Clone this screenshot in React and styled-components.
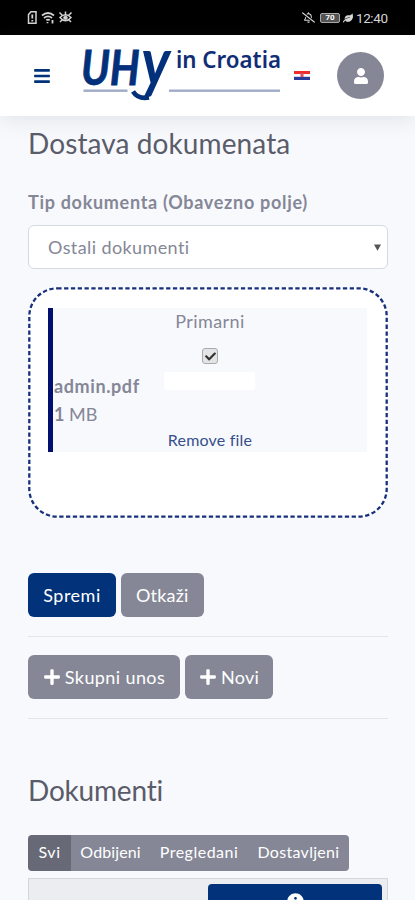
import styled, { createGlobalStyle } from "styled-components";
import {
  FaBars,
  FaUser,
  FaPlus,
  FaInfoCircle,
  FaRegBellSlash,
  FaLeaf,
  FaCheck,
} from "react-icons/fa";

const COLORS = {
  navy: "#02337a",
  darkNavy: "#000f70",
  grey: "#858796",
  darkGrey: "#676977",
  heading: "#5a5c69",
  page: "#f8f9fd",
  line: "#e4e5ea",
};

const filters = [
  { label: "Svi", width: 43, spacing: 0.6, active: true },
  { label: "Odbijeni", width: 79, spacing: 0.1 },
  { label: "Pregledani", width: 98, spacing: 0.5 },
  { label: "Dostavljeni", width: 101, spacing: 0.3 },
];

const App = () => {
  return (
    <>
      <GlobalStyle />
      <Screen>
        <StatusBar>
          <StatusLeft>
            <svg width="46" height="16" viewBox="0 0 46 16" fill="none" stroke="#d4d4d4">
              <path d="M1.5 4.5 4 1.7h5v11.6H1.5z" strokeWidth="1.5" />
              <path d="M5.3 4.5v4M5.3 10v1.5" strokeWidth="1.8" />
              <path d="M15 5.5q6-5 12 0M17 8q4-3.2 8 0M19.3 10.3q1.7-1.3 3.4 0" strokeWidth="1.7" />
              <path d="M20.5 12v1.3M25.5 10v3.5" strokeWidth="1.8" />
              <path d="M33 7.5q5.5-5.5 11 0q-5.5 6.5-11 0zM32.5 2.5l3 3M38.5 1.5v3M44.5 2.5l-3 3M33 12l2-2M44 12l-2-2" strokeWidth="1.5" />
              <circle cx="38.5" cy="7.7" r="1.8" fill="#d4d4d4" />
            </svg>
          </StatusLeft>
          <StatusRight>
            <FaRegBellSlash size={13} />
            <Battery>70</Battery>
            <FaLeaf size={10} />
            <Clock>12:40</Clock>
          </StatusRight>
        </StatusBar>

        <Header>
          <MenuButton>
            <FaBars size={18} />
          </MenuButton>
          <Logo />
          <Flag />
          <Avatar>
            <FaUser size={16} />
          </Avatar>
        </Header>

        <Content>
          <Title>Dostava dokumenata</Title>
          <Label>Tip dokumenta (Obavezno polje)</Label>
          <Select>
            <span>Ostali dokumenti</span>
            <Arrow width="7" height="7" viewBox="0 0 7 7">
              <path d="M0 0.5h7L3.5 6.8z" fill="#555" />
            </Arrow>
          </Select>

          <DropZone>
            <DropBorder width="360" height="231">
              <rect x="1.3" y="1.3" width="357.4" height="228.4" rx="28" />
            </DropBorder>
            <FileCard>
              <Primary>Primarni</Primary>
              <Checkbox>
                <FaCheck size={11} />
              </Checkbox>
              <FileRow>
                <FileName>admin.pdf</FileName>
                <BlankField />
              </FileRow>
              <FileSize>
                <b>1</b> MB
              </FileSize>
              <RemoveLink>Remove file</RemoveLink>
            </FileCard>
          </DropZone>

          <ButtonRow>
            <Button $primary $width={88} $spacing={0.5}>
              Spremi
            </Button>
            <Button $width={82.5} $spacing={0.2}>
              Otkaži
            </Button>
          </ButtonRow>
          <Line />
          <ButtonRow>
            <Button $width={152} $spacing={0.4}>
              <FaPlus size={18} /> Skupni unos
            </Button>
            <Button $width={88} $spacing={0.2}>
              <FaPlus size={18} /> Novi
            </Button>
          </ButtonRow>
          <Line />

          <SubTitle>Dokumenti</SubTitle>
          <Filters>
            {filters.map((filter) => (
              <Filter
                key={filter.label}
                $active={filter.active}
                $width={filter.width}
                $spacing={filter.spacing}
              >
                {filter.label}
              </Filter>
            ))}
          </Filters>
          <Table>
            <InfoButton>
              <FaInfoCircle size={17} />
            </InfoButton>
          </Table>
        </Content>
      </Screen>
    </>
  );
};

const Logo = () => (
  <LogoSvg width="200" height="54" viewBox="0 0 200 54">
    <rect x="1.5" y="40.5" width="44" height="2.4" fill="#a0abc8" />
    <rect x="87" y="40.5" width="111" height="2.4" fill="#a0abc8" />
    <text
      x="-1"
      y="36"
      fill="#02307a"
      stroke="#02307a"
      strokeWidth="0.8"
      fontFamily="Lato, sans-serif"
      fontSize="47"
      fontStyle="italic"
      fontWeight="700"
      textLength="89"
      lengthAdjust="spacingAndGlyphs"
    >
      UH<tspan dx="1.5" fontSize="66" strokeWidth="0">y</tspan>
    </text>
    {/* swoosh under the y */}
    <path d="M51 42.5Q56 50.5 67 48.5" fill="none" stroke="#02307a" strokeWidth="4.6" />
    <text x="94" y="19.3" fill="#102d76" fontFamily="Noto Sans, sans-serif" fontSize="22.5" fontWeight="600" textLength="105" lengthAdjust="spacingAndGlyphs">
      in Croatia
    </text>
  </LogoSvg>
);

const Flag = () => (
  <FlagSvg width="16" height="9" viewBox="0 0 16 9">
    <rect width="16" height="3.2" fill="#f02b2b" />
    <rect y="3.2" width="16" height="2.6" fill="#fff" />
    <rect y="5.8" width="16" height="3.2" fill="#2a3a98" />
    <rect x="6.5" y="2" width="3" height="4" fill="#d8505a" />
  </FlagSvg>
);

const GlobalStyle = createGlobalStyle`
  * {
    box-sizing: border-box;
  }
  body {
    margin: 0;
    overflow: hidden;
    font-family: Lato, "Noto Sans", sans-serif;
    color: ${COLORS.grey};
  }
`;

const Screen = styled.div`
  display: flex;
  flex-direction: column;
  width: 415px;
  height: 900px;
  overflow: hidden;
  background-color: ${COLORS.page};
`;

const StatusBar = styled.div`
  display: flex;
  justify-content: space-between;
  align-items: center;
  flex: none;
  height: 35px;
  padding: 0 27px;
  background-color: #000;
  color: #d8d8d8;
`;

const StatusLeft = styled.div`
  display: flex;
`;

const StatusRight = styled.div`
  display: flex;
  align-items: center;
  gap: 3px;
`;

const Battery = styled.span`
  width: 20px;
  height: 10px;
  margin-left: 2px;
  border: 1px solid #aaa;
  border-radius: 2px;
  background-color: #555;
  color: #fff;
  font: bold 8px/8px Roboto, sans-serif;
  text-align: center;
`;

const Clock = styled.span`
  width: 32px;
  font: 13.5px/16px Roboto, sans-serif;
  letter-spacing: -0.4px;
  white-space: nowrap;
`;

const Header = styled.header`
  display: flex;
  align-items: center;
  flex: none;
  height: 81px;
  padding-left: 33px;
  background-color: #fff;
  box-shadow: 0 2px 22px rgba(58, 59, 69, 0.13);
`;

const MenuButton = styled.div`
  display: flex;
  width: 49px;
  color: ${COLORS.navy};
`;

const LogoSvg = styled.svg`
  overflow: visible;
`;

const FlagSvg = styled.svg`
  margin-left: 12px;
`;

const Avatar = styled.div`
  display: flex;
  justify-content: center;
  align-items: center;
  width: 47px;
  height: 47px;
  margin-left: 27px;
  border-radius: 50%;
  background-color: ${COLORS.grey};
  color: #fff;
`;

const Content = styled.main`
  padding: 10px 27px 0 28px;
`;

const Title = styled.h1`
  margin: 0;
  color: ${COLORS.heading};
  font-size: 28px;
  font-weight: 400;
  line-height: 34px;
  letter-spacing: 0.1px;
  white-space: nowrap;
`;

const SubTitle = styled(Title)`
  margin-top: 54px;
  letter-spacing: -0.2px;
`;

const Label = styled.div`
  margin-top: 31px;
  font-size: 18px;
  font-weight: 700;
  line-height: 22px;
  letter-spacing: 0.7px;
  white-space: nowrap;
`;

const Select = styled.div`
  display: flex;
  justify-content: space-between;
  align-items: center;
  height: 44px;
  margin-top: 12px;
  padding: 0 6px 0 19px;
  border: 1px solid #d6d8e2;
  border-radius: 6px;
  background-color: #fff;
  font-size: 18px;
  letter-spacing: 0.4px;
`;

const Arrow = styled.svg`
  flex: none;
`;

const DropZone = styled.div`
  position: relative;
  height: 231px;
  margin-top: 18px;
  padding: 21px 20px;
  border-radius: 30px;
  background-color: #fff;
`;

const DropBorder = styled.svg`
  position: absolute;
  top: 0;
  left: 0;

  rect {
    fill: none;
    stroke: #17307c;
    stroke-width: 2.3;
    stroke-dasharray: 4.3 2.5;
  }
`;

const FileCard = styled.div`
  display: flex;
  flex-direction: column;
  align-items: center;
  width: 319px;
  height: 144px;
  border-left: 5px solid ${COLORS.darkNavy};
  background-color: ${COLORS.page};
  font-size: 18px;
`;

const Primary = styled.div`
  margin-top: 2px;
  line-height: 22px;
  letter-spacing: 0.4px;
`;

const Checkbox = styled.div`
  display: flex;
  justify-content: center;
  align-items: center;
  width: 16px;
  height: 16px;
  margin-top: 16px;
  border: 1px solid #aaa;
  border-radius: 3px;
  background-color: #e4e4e6;
  color: #333;
`;

const FileRow = styled.div`
  display: flex;
  align-items: flex-start;
  width: 100%;
  height: 28px;
  margin-top: 8px;
`;

const FileName = styled.div`
  width: 111px;
  margin-top: 3px;
  padding-left: 1px;
  font-weight: 700;
  line-height: 22px;
  letter-spacing: 0.6px;
`;

const BlankField = styled.div`
  width: 91px;
  height: 18px;
  border-radius: 3px;
  background-color: #fff;
`;

const FileSize = styled.div`
  align-self: flex-start;
  margin-top: 3px;
  padding-left: 1px;
  line-height: 22px;
`;

const RemoveLink = styled.a`
  margin-top: 5px;
  color: #35508c;
  font-size: 16px;
  line-height: 20px;
  letter-spacing: 0.2px;
`;

const ButtonRow = styled.div`
  display: flex;
  gap: 5px;

  ${DropZone} + & {
    margin-top: 55.4px;
  }
`;

const Button = styled.button`
  display: flex;
  justify-content: center;
  align-items: center;
  gap: 4px;
  width: ${({ $width }) => $width}px;
  height: 44px;
  padding: 0;
  border: none;
  border-radius: 6px;
  background-color: ${({ $primary }) => ($primary ? COLORS.navy : COLORS.grey)};
  color: #fff;
  font: 18px Lato, sans-serif;
  letter-spacing: ${({ $spacing }) => $spacing}px;
  white-space: nowrap;
`;

const Line = styled.hr`
  height: 1px;
  margin: 18.3px 0 18.8px;
  border: none;
  background-color: ${COLORS.line};
`;

const Filters = styled.div`
  display: flex;
  width: 321px;
  height: 36px;
  margin-top: 28px;
  overflow: hidden;
  border-radius: 4px;
`;

const Filter = styled.div`
  display: flex;
  justify-content: center;
  align-items: center;
  width: ${({ $width }) => $width}px;
  background-color: ${({ $active }) => ($active ? COLORS.darkGrey : COLORS.grey)};
  color: #fff;
  font-size: 16px;
  line-height: 20px;
  padding-bottom: 1px;
  letter-spacing: ${({ $spacing }) => $spacing}px;
`;

const Table = styled.div`
  display: flex;
  justify-content: flex-end;
  height: 60px;
  margin-top: 7px;
  padding: 5px 5px 0;
  border: 1px solid #d4d6de;
  background-color: #ecedf0;
`;

const InfoButton = styled.div`
  display: flex;
  justify-content: center;
  width: 174px;
  height: 50px;
  padding-top: 9px;
  border-radius: 4px;
  background-color: ${COLORS.navy};
  color: #fff;
`;

export default App;
